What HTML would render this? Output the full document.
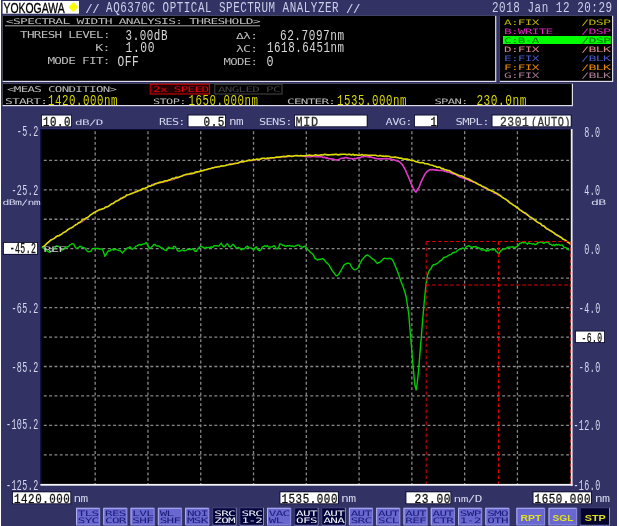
<!DOCTYPE html>
<html><head><meta charset="utf-8"><title>AQ6370C OPTICAL SPECTRUM ANALYZER</title>
<style>html,body{margin:0;padding:0;background:#323264;overflow:hidden}svg{will-change:transform}svg text{white-space:pre}</style></head>
<body><svg width="619" height="526" viewBox="0 0 619 526" style="display:block"><rect x="0.00" y="0.00" width="619.00" height="526.00" fill="#323264"/>
<rect x="0.00" y="0.00" width="1.00" height="526.00" fill="#ffffff"/>
<rect x="617.00" y="0.00" width="2.00" height="526.00" fill="#ffffff"/>
<rect x="2.60" y="1.00" width="76.40" height="12.70" fill="#ffffff"/>
<text x="3.60" y="12.90" font-family='"Liberation Sans", sans-serif' font-size="14.39" fill="#000000" textLength="61.00" lengthAdjust="spacingAndGlyphs" xml:space="preserve" stroke="#000" stroke-width="0.35">YOKOGAWA</text>
<polygon points="73.3,1.9 78,7.1 73.3,12.3 68.6,7.1" fill="#ffff00"/>
<text x="85.20" y="11.60" font-family='"DejaVu Sans Mono", "Liberation Mono", monospace' font-size="10.15" fill="#ceceea" textLength="14.00" lengthAdjust="spacingAndGlyphs" xml:space="preserve" letter-spacing="-0.56">//</text>
<text x="106.10" y="12.00" font-family='"Liberation Mono", monospace' font-size="13.81" fill="#ceceea" textLength="233.00" lengthAdjust="spacingAndGlyphs" xml:space="preserve" letter-spacing="0.69">AQ6370C OPTICAL SPECTRUM ANALYZER</text>
<text x="346.00" y="11.60" font-family='"DejaVu Sans Mono", "Liberation Mono", monospace' font-size="10.15" fill="#ceceea" textLength="14.00" lengthAdjust="spacingAndGlyphs" xml:space="preserve" letter-spacing="-0.56">//</text>
<text x="492.00" y="12.00" font-family='"Liberation Mono", monospace' font-size="13.81" fill="#ceceea" textLength="120.60" lengthAdjust="spacingAndGlyphs" xml:space="preserve" letter-spacing="0.69">2018 Jan 12 20:29</text>
<rect x="2.60" y="15.80" width="493.70" height="66.20" fill="#dcdcec"/>
<rect x="2.60" y="15.80" width="492.50" height="65.00" fill="#000000"/>
<text x="6.00" y="23.80" font-family='"DejaVu Sans Mono", "Liberation Mono", monospace' font-size="7.82" fill="#bcbcbc" textLength="253.80" lengthAdjust="spacingAndGlyphs" xml:space="preserve" letter-spacing="-0.43">&lt;SPECTRAL WIDTH ANALYSIS: THRESHOLD&gt;</text>
<line x1="5.00" y1="25.80" x2="260.00" y2="25.80" stroke="#a8a8a8" stroke-width="1.00"/>
<text x="20.00" y="38.00" font-family='"DejaVu Sans Mono", "Liberation Mono", monospace' font-size="8.78" fill="#bcbcbc" textLength="89.80" lengthAdjust="spacingAndGlyphs" xml:space="preserve" letter-spacing="-0.48">THRESH LEVEL:</text>
<text x="95.30" y="51.00" font-family='"DejaVu Sans Mono", "Liberation Mono", monospace' font-size="8.78" fill="#bcbcbc" textLength="14.50" lengthAdjust="spacingAndGlyphs" xml:space="preserve" letter-spacing="-0.48">K:</text>
<text x="47.40" y="64.00" font-family='"DejaVu Sans Mono", "Liberation Mono", monospace' font-size="8.78" fill="#bcbcbc" textLength="62.40" lengthAdjust="spacingAndGlyphs" xml:space="preserve" letter-spacing="-0.48">MODE FIT:</text>
<text x="125.60" y="39.50" font-family='"Liberation Mono", monospace' font-size="13.96" fill="#d8d8d8" textLength="42.40" lengthAdjust="spacingAndGlyphs" xml:space="preserve" letter-spacing="0.70">3.00dB</text>
<text x="125.60" y="52.40" font-family='"Liberation Mono", monospace' font-size="13.81" fill="#d8d8d8" textLength="29.40" lengthAdjust="spacingAndGlyphs" xml:space="preserve" letter-spacing="0.69">1.00</text>
<text x="117.50" y="65.60" font-family='"Liberation Mono", monospace' font-size="14.11" fill="#d8d8d8" textLength="21.90" lengthAdjust="spacingAndGlyphs" xml:space="preserve" letter-spacing="0.71">OFF</text>
<text x="236.00" y="38.50" font-family='"DejaVu Sans Mono", "Liberation Mono", monospace' font-size="8.78" fill="#bcbcbc" textLength="21.30" lengthAdjust="spacingAndGlyphs" xml:space="preserve" letter-spacing="-0.48">Δλ:</text>
<text x="236.00" y="51.50" font-family='"DejaVu Sans Mono", "Liberation Mono", monospace' font-size="8.78" fill="#bcbcbc" textLength="21.30" lengthAdjust="spacingAndGlyphs" xml:space="preserve" letter-spacing="-0.48">λC:</text>
<text x="223.60" y="64.50" font-family='"DejaVu Sans Mono", "Liberation Mono", monospace' font-size="8.78" fill="#bcbcbc" textLength="33.70" lengthAdjust="spacingAndGlyphs" xml:space="preserve" letter-spacing="-0.48">MODE:</text>
<text x="280.00" y="39.50" font-family='"Liberation Mono", monospace' font-size="13.96" fill="#d8d8d8" textLength="64.60" lengthAdjust="spacingAndGlyphs" xml:space="preserve" letter-spacing="0.70">62.7097nm</text>
<text x="267.00" y="52.40" font-family='"Liberation Mono", monospace' font-size="13.81" fill="#d8d8d8" textLength="77.60" lengthAdjust="spacingAndGlyphs" xml:space="preserve" letter-spacing="0.69">1618.6451nm</text>
<text x="266.40" y="65.60" font-family='"Liberation Mono", monospace' font-size="14.11" fill="#d8d8d8" textLength="7.60" lengthAdjust="spacingAndGlyphs" xml:space="preserve" letter-spacing="0.71">0</text>
<rect x="499.80" y="15.80" width="113.40" height="66.20" fill="#dcdcec"/>
<rect x="499.80" y="15.80" width="112.20" height="65.00" fill="#000000"/>
<rect x="503.00" y="36.00" width="107.80" height="8.00" fill="#00ff00"/>
<text x="504.00" y="25.40" font-family='"DejaVu Sans Mono", "Liberation Mono", monospace' font-size="7.41" fill="#bcb400" textLength="34.65" lengthAdjust="spacingAndGlyphs" xml:space="preserve" letter-spacing="-0.41">A:FIX</text>
<text x="581.20" y="25.40" font-family='"DejaVu Sans Mono", "Liberation Mono", monospace' font-size="7.41" fill="#bcb400" textLength="29.00" lengthAdjust="spacingAndGlyphs" xml:space="preserve" letter-spacing="-0.41">/DSP</text>
<text x="504.00" y="34.00" font-family='"DejaVu Sans Mono", "Liberation Mono", monospace' font-size="7.41" fill="#d828b8" textLength="48.51" lengthAdjust="spacingAndGlyphs" xml:space="preserve" letter-spacing="-0.41">B:WRITE</text>
<text x="581.20" y="34.00" font-family='"DejaVu Sans Mono", "Liberation Mono", monospace' font-size="7.41" fill="#d828b8" textLength="29.00" lengthAdjust="spacingAndGlyphs" xml:space="preserve" letter-spacing="-0.41">/DSP</text>
<text x="504.00" y="43.00" font-family='"DejaVu Sans Mono", "Liberation Mono", monospace' font-size="7.41" fill="#007000" textLength="34.65" lengthAdjust="spacingAndGlyphs" xml:space="preserve" letter-spacing="-0.41">C:B-A</text>
<text x="581.20" y="43.00" font-family='"DejaVu Sans Mono", "Liberation Mono", monospace' font-size="7.41" fill="#007000" textLength="29.00" lengthAdjust="spacingAndGlyphs" xml:space="preserve" letter-spacing="-0.41">/DSP</text>
<text x="504.00" y="52.20" font-family='"DejaVu Sans Mono", "Liberation Mono", monospace' font-size="7.41" fill="#d88888" textLength="34.65" lengthAdjust="spacingAndGlyphs" xml:space="preserve" letter-spacing="-0.41">D:FIX</text>
<text x="581.20" y="52.20" font-family='"DejaVu Sans Mono", "Liberation Mono", monospace' font-size="7.41" fill="#d88888" textLength="29.00" lengthAdjust="spacingAndGlyphs" xml:space="preserve" letter-spacing="-0.41">/BLK</text>
<text x="504.00" y="60.80" font-family='"DejaVu Sans Mono", "Liberation Mono", monospace' font-size="7.41" fill="#4858c8" textLength="34.65" lengthAdjust="spacingAndGlyphs" xml:space="preserve" letter-spacing="-0.41">E:FIX</text>
<text x="581.20" y="60.80" font-family='"DejaVu Sans Mono", "Liberation Mono", monospace' font-size="7.41" fill="#4858c8" textLength="29.00" lengthAdjust="spacingAndGlyphs" xml:space="preserve" letter-spacing="-0.41">/BLK</text>
<text x="504.00" y="69.60" font-family='"DejaVu Sans Mono", "Liberation Mono", monospace' font-size="7.41" fill="#e88800" textLength="34.65" lengthAdjust="spacingAndGlyphs" xml:space="preserve" letter-spacing="-0.41">F:FIX</text>
<text x="581.20" y="69.60" font-family='"DejaVu Sans Mono", "Liberation Mono", monospace' font-size="7.41" fill="#e88800" textLength="29.00" lengthAdjust="spacingAndGlyphs" xml:space="preserve" letter-spacing="-0.41">/BLK</text>
<text x="504.00" y="78.20" font-family='"DejaVu Sans Mono", "Liberation Mono", monospace' font-size="7.41" fill="#a87898" textLength="34.65" lengthAdjust="spacingAndGlyphs" xml:space="preserve" letter-spacing="-0.41">G:FIX</text>
<text x="581.20" y="78.20" font-family='"DejaVu Sans Mono", "Liberation Mono", monospace' font-size="7.41" fill="#a87898" textLength="29.00" lengthAdjust="spacingAndGlyphs" xml:space="preserve" letter-spacing="-0.41">/BLK</text>
<rect x="2.60" y="83.70" width="570.40" height="22.50" fill="#dcdcec"/>
<rect x="2.60" y="83.70" width="569.20" height="21.30" fill="#000000"/>
<text x="7.00" y="92.40" font-family='"DejaVu Sans Mono", "Liberation Mono", monospace' font-size="7.96" fill="#bcbcbc" textLength="109.40" lengthAdjust="spacingAndGlyphs" xml:space="preserve" letter-spacing="-0.44">&lt;MEAS CONDITION&gt;</text>
<text x="5.00" y="104.00" font-family='"DejaVu Sans Mono", "Liberation Mono", monospace' font-size="7.96" fill="#bcbcbc" textLength="42.20" lengthAdjust="spacingAndGlyphs" xml:space="preserve" letter-spacing="-0.44">START:</text>
<text x="48.00" y="104.50" font-family='"Liberation Mono", monospace' font-size="13.96" fill="#d8d800" textLength="70.00" lengthAdjust="spacingAndGlyphs" xml:space="preserve" letter-spacing="0.70">1420.000nm</text>
<rect x="150.20" y="84.20" width="59.40" height="9.80" fill="#240000" stroke="#e00000" stroke-width="1"/>
<text x="153.00" y="92.40" font-family='"DejaVu Sans Mono", "Liberation Mono", monospace' font-size="7.68" fill="#e40000" textLength="55.40" lengthAdjust="spacingAndGlyphs" xml:space="preserve" letter-spacing="-0.42">2x SPEED</text>
<rect x="214.80" y="84.20" width="67.20" height="9.80" fill="#000000" stroke="#484848" stroke-width="1"/>
<text x="218.00" y="92.40" font-family='"DejaVu Sans Mono", "Liberation Mono", monospace' font-size="7.68" fill="#404040" textLength="61.80" lengthAdjust="spacingAndGlyphs" xml:space="preserve" letter-spacing="-0.42">ANGLED PC</text>
<text x="153.00" y="104.00" font-family='"DejaVu Sans Mono", "Liberation Mono", monospace' font-size="7.41" fill="#bcbcbc" textLength="32.80" lengthAdjust="spacingAndGlyphs" xml:space="preserve" letter-spacing="-0.41">STOP:</text>
<text x="188.40" y="104.50" font-family='"Liberation Mono", monospace' font-size="13.96" fill="#d8d800" textLength="70.20" lengthAdjust="spacingAndGlyphs" xml:space="preserve" letter-spacing="0.70">1650.000nm</text>
<text x="287.00" y="104.00" font-family='"DejaVu Sans Mono", "Liberation Mono", monospace' font-size="7.41" fill="#bcbcbc" textLength="48.20" lengthAdjust="spacingAndGlyphs" xml:space="preserve" letter-spacing="-0.41">CENTER:</text>
<text x="337.00" y="104.50" font-family='"Liberation Mono", monospace' font-size="13.96" fill="#d8d800" textLength="70.00" lengthAdjust="spacingAndGlyphs" xml:space="preserve" letter-spacing="0.70">1535.000nm</text>
<text x="434.40" y="104.00" font-family='"DejaVu Sans Mono", "Liberation Mono", monospace' font-size="7.41" fill="#bcbcbc" textLength="33.40" lengthAdjust="spacingAndGlyphs" xml:space="preserve" letter-spacing="-0.41">SPAN:</text>
<text x="476.40" y="104.50" font-family='"Liberation Mono", monospace' font-size="13.96" fill="#d8d800" textLength="50.60" lengthAdjust="spacingAndGlyphs" xml:space="preserve" letter-spacing="0.70">230.0nm</text>
<rect x="41.00" y="114.60" width="31.00" height="12.60" fill="#0a0a30"/>
<rect x="41.90" y="115.50" width="29.20" height="10.80" fill="#ffffff"/>
<text x="43.00" y="126.00" font-family='"Liberation Mono", monospace' font-size="13.20" fill="#101010" textLength="28.00" lengthAdjust="spacingAndGlyphs" xml:space="preserve" letter-spacing="0.66" stroke="#101010" stroke-width="0.3">10.0</text>
<text x="75.00" y="125.20" font-family='"DejaVu Sans Mono", "Liberation Mono", monospace' font-size="7.68" fill="#d4d4ec" textLength="27.80" lengthAdjust="spacingAndGlyphs" xml:space="preserve" letter-spacing="-0.42">dB/D</text>
<text x="159.00" y="125.20" font-family='"DejaVu Sans Mono", "Liberation Mono", monospace' font-size="8.23" fill="#d4d4ec" textLength="25.80" lengthAdjust="spacingAndGlyphs" xml:space="preserve" letter-spacing="-0.45">RES:</text>
<rect x="187.60" y="114.60" width="38.40" height="12.60" fill="#0a0a30"/>
<rect x="188.50" y="115.50" width="36.60" height="10.80" fill="#ffffff"/>
<text x="203.60" y="126.00" font-family='"Liberation Mono", monospace' font-size="13.20" fill="#101010" textLength="21.40" lengthAdjust="spacingAndGlyphs" xml:space="preserve" letter-spacing="0.66" stroke="#101010" stroke-width="0.3">0.5</text>
<text x="229.00" y="125.20" font-family='"DejaVu Sans Mono", "Liberation Mono", monospace' font-size="9.69" fill="#d4d4ec" textLength="13.80" lengthAdjust="spacingAndGlyphs" xml:space="preserve" letter-spacing="-0.53">nm</text>
<text x="259.00" y="125.20" font-family='"DejaVu Sans Mono", "Liberation Mono", monospace' font-size="8.23" fill="#d4d4ec" textLength="32.80" lengthAdjust="spacingAndGlyphs" xml:space="preserve" letter-spacing="-0.45">SENS:</text>
<rect x="294.00" y="114.60" width="73.60" height="12.60" fill="#0a0a30"/>
<rect x="294.90" y="115.50" width="71.80" height="10.80" fill="#ffffff"/>
<text x="295.60" y="126.00" font-family='"Liberation Mono", monospace' font-size="13.20" fill="#303030" textLength="23.00" lengthAdjust="spacingAndGlyphs" xml:space="preserve" letter-spacing="0.66" stroke="#303030" stroke-width="0.3">MID</text>
<text x="385.60" y="125.20" font-family='"DejaVu Sans Mono", "Liberation Mono", monospace' font-size="8.23" fill="#d4d4ec" textLength="26.20" lengthAdjust="spacingAndGlyphs" xml:space="preserve" letter-spacing="-0.45">AVG:</text>
<rect x="414.00" y="114.60" width="24.00" height="12.60" fill="#0a0a30"/>
<rect x="414.90" y="115.50" width="22.20" height="10.80" fill="#ffffff"/>
<text x="430.40" y="126.00" font-family='"Liberation Mono", monospace' font-size="13.20" fill="#101010" textLength="7.00" lengthAdjust="spacingAndGlyphs" xml:space="preserve" letter-spacing="0.66" stroke="#101010" stroke-width="0.3">1</text>
<text x="455.60" y="125.20" font-family='"DejaVu Sans Mono", "Liberation Mono", monospace' font-size="8.23" fill="#d4d4ec" textLength="33.20" lengthAdjust="spacingAndGlyphs" xml:space="preserve" letter-spacing="-0.45">SMPL:</text>
<rect x="491.60" y="114.60" width="80.00" height="12.60" fill="#0a0a30"/>
<rect x="492.50" y="115.50" width="78.20" height="10.80" fill="#ffffff"/>
<text x="500.00" y="126.00" font-family='"Liberation Mono", monospace' font-size="13.20" fill="#303030" textLength="29.40" lengthAdjust="spacingAndGlyphs" xml:space="preserve" letter-spacing="0.66" stroke="#303030" stroke-width="0.3">2301</text>
<text x="531.00" y="126.00" font-family='"Liberation Mono", monospace' font-size="13.20" fill="#303030" textLength="40.00" lengthAdjust="spacingAndGlyphs" xml:space="preserve" letter-spacing="0.66" stroke="#303030" stroke-width="0.3">(AUTO)</text>
<rect x="40.20" y="129.00" width="530.80" height="355.00" fill="#0c0c38"/>
<rect x="41.60" y="130.00" width="529.40" height="354.00" fill="#000000"/>
<line x1="95.18" y1="131.30" x2="95.18" y2="484.00" stroke="#888888" stroke-width="1.30" stroke-dasharray="2.9 2.43"/>
<line x1="147.96" y1="131.30" x2="147.96" y2="484.00" stroke="#888888" stroke-width="1.30" stroke-dasharray="2.9 2.43"/>
<line x1="200.74" y1="131.30" x2="200.74" y2="484.00" stroke="#888888" stroke-width="1.30" stroke-dasharray="2.9 2.43"/>
<line x1="253.52" y1="131.30" x2="253.52" y2="484.00" stroke="#888888" stroke-width="1.30" stroke-dasharray="2.9 2.43"/>
<line x1="306.30" y1="131.30" x2="306.30" y2="484.00" stroke="#888888" stroke-width="1.30" stroke-dasharray="2.9 2.43"/>
<line x1="359.08" y1="131.30" x2="359.08" y2="484.00" stroke="#888888" stroke-width="1.30" stroke-dasharray="2.9 2.43"/>
<line x1="411.86" y1="131.30" x2="411.86" y2="484.00" stroke="#888888" stroke-width="1.30" stroke-dasharray="2.9 2.43"/>
<line x1="464.64" y1="131.30" x2="464.64" y2="484.00" stroke="#888888" stroke-width="1.30" stroke-dasharray="2.9 2.43"/>
<line x1="517.42" y1="131.30" x2="517.42" y2="484.00" stroke="#888888" stroke-width="1.30" stroke-dasharray="2.9 2.43"/>
<line x1="43.80" y1="160.35" x2="570.50" y2="160.35" stroke="#888888" stroke-width="1.30" stroke-dasharray="2.9 2.43"/>
<line x1="43.80" y1="189.80" x2="570.50" y2="189.80" stroke="#888888" stroke-width="1.30" stroke-dasharray="2.9 2.43"/>
<line x1="43.80" y1="219.25" x2="570.50" y2="219.25" stroke="#888888" stroke-width="1.30" stroke-dasharray="2.9 2.43"/>
<line x1="43.80" y1="248.70" x2="570.50" y2="248.70" stroke="#888888" stroke-width="1.30" stroke-dasharray="2.9 2.43"/>
<line x1="43.80" y1="278.15" x2="570.50" y2="278.15" stroke="#888888" stroke-width="1.30" stroke-dasharray="2.9 2.43"/>
<line x1="43.80" y1="307.60" x2="570.50" y2="307.60" stroke="#888888" stroke-width="1.30" stroke-dasharray="2.9 2.43"/>
<line x1="43.80" y1="337.05" x2="570.50" y2="337.05" stroke="#888888" stroke-width="1.30" stroke-dasharray="2.9 2.43"/>
<line x1="43.80" y1="366.50" x2="570.50" y2="366.50" stroke="#888888" stroke-width="1.30" stroke-dasharray="2.9 2.43"/>
<line x1="43.80" y1="395.95" x2="570.50" y2="395.95" stroke="#888888" stroke-width="1.30" stroke-dasharray="2.9 2.43"/>
<line x1="43.80" y1="425.40" x2="570.50" y2="425.40" stroke="#888888" stroke-width="1.30" stroke-dasharray="2.9 2.43"/>
<line x1="43.80" y1="454.85" x2="570.50" y2="454.85" stroke="#888888" stroke-width="1.30" stroke-dasharray="2.9 2.43"/>
<polyline fill="none" stroke="#d838c0" stroke-width="1.00" stroke-linejoin="round" stroke-linecap="round" points="42.5,247.5 44.0,246.0 45.5,245.0 47.0,243.1 48.5,241.5 50.0,240.3 51.5,239.6 53.0,238.7 54.5,238.0 56.0,237.2 57.5,236.5 59.0,235.3 60.5,234.7 62.0,233.7 63.5,232.6 65.0,231.8 66.5,230.7 68.0,230.0 69.5,228.9 71.0,228.0 72.5,227.3 74.0,225.6 75.5,225.4 77.0,224.2 78.5,223.4 80.0,223.1 81.5,222.2 83.0,221.7 84.5,220.2 86.0,219.0 87.5,217.8 89.0,216.4 90.5,214.8 92.0,213.8 93.5,213.1 95.0,211.9 96.5,211.1 98.0,210.1 99.5,209.8 101.0,209.5 102.5,209.2 104.0,208.6 105.5,207.9 107.0,206.9 108.5,205.7 110.0,204.9 111.5,203.8 113.0,203.0 114.5,202.3 116.0,201.5 117.5,200.7 119.0,199.8 120.5,199.5 122.0,198.8 123.5,197.9 125.0,196.9 126.5,195.9 128.0,194.9 129.5,194.2 131.0,193.5 132.5,193.0 134.0,192.6 135.5,191.7 137.0,191.0 138.5,191.0 140.0,190.5 141.5,190.3 143.0,189.1 144.5,188.8 146.0,188.1 147.5,187.1 149.0,186.3 150.5,185.6 152.0,184.3 153.5,184.0 155.0,183.6 156.5,183.1 158.0,183.1 159.5,183.4 161.0,182.9 162.5,182.2 164.0,182.2 165.5,181.9 167.0,181.5 168.5,180.9 170.0,179.9 171.5,180.3 173.0,179.9 174.5,179.2 176.0,178.6 177.5,178.2 179.0,177.7 180.5,176.7 182.0,176.5 183.5,175.4 185.0,174.7 186.5,175.1 188.0,174.7 189.5,174.5 191.0,174.3 192.5,174.0 194.0,173.0 195.5,173.0 197.0,172.6 198.5,171.7 200.0,171.8 201.5,171.5 203.0,170.4 204.5,169.8 206.0,169.4 207.5,169.3 209.0,168.6 210.5,168.8 212.0,168.4 213.5,167.4 215.0,167.0 216.5,167.0 218.0,166.9 219.5,166.4 221.0,166.6 222.5,166.3 224.0,165.9 225.5,165.3 227.0,165.3 228.5,164.2 230.0,163.9 231.5,163.6 233.0,163.7 234.5,163.8 236.0,163.9 237.5,163.4 239.0,163.0 240.5,162.3 242.0,162.2 243.5,162.1 245.0,161.5 246.5,161.2 248.0,160.5 249.5,161.2 251.0,160.4 252.5,160.7 254.0,160.6 255.5,160.4 257.0,159.7 258.5,159.5 260.0,159.2 261.5,159.2 263.0,158.2 264.5,159.1 266.0,158.7 267.5,159.3 269.0,159.0 270.5,158.4 272.0,158.1 273.5,158.1 275.0,157.6 276.5,157.7 278.0,157.6 279.5,157.6 281.0,157.4 282.5,157.3 284.0,157.1 285.5,156.8 287.0,157.0 288.5,156.9 290.0,156.5 291.5,156.0 293.0,156.4 294.5,155.7 296.0,155.5 297.5,156.0 299.0,155.8 300.5,155.9 302.0,155.6 303.5,156.2 305.0,156.5 306.5,156.6 308.0,156.4 309.5,156.8 311.0,156.7 312.5,156.4 314.0,156.5 315.5,156.6 317.0,156.6 318.5,156.6 320.0,156.7 321.5,156.7 323.0,157.5 324.5,157.2 326.0,158.1 327.5,157.8 329.0,158.8 330.5,158.7 332.0,159.3 333.5,159.1 335.0,159.8 336.5,160.0 338.0,159.8 339.5,159.1 341.0,158.4 342.5,158.2 344.0,158.2 345.5,157.4 347.0,157.8 348.5,158.2 350.0,158.5 351.5,158.5 353.0,159.2 354.5,158.5 356.0,158.6 357.5,158.1 359.0,157.6 360.5,157.7 362.0,156.7 363.5,156.8 365.0,156.3 366.5,156.5 368.0,156.8 369.5,156.9 371.0,157.1 372.5,157.6 374.0,157.7 375.5,158.5 377.0,158.5 378.5,158.9 380.0,158.8 381.5,158.8 383.0,158.8 384.5,158.5 386.0,158.6 387.5,158.5 389.0,158.8 390.5,159.0 392.0,159.6 393.5,159.5 395.0,160.3 396.5,160.8 398.0,161.1 399.5,161.9 401.0,163.2 402.5,164.9 404.0,167.5 405.5,170.2 407.0,173.8 408.5,177.0 410.0,180.7 411.5,184.5 413.0,187.8 414.5,190.7 416.0,192.1 417.5,189.5 419.0,187.4 420.5,183.3 422.0,180.0 423.5,177.0 425.0,174.0 426.5,172.2 428.0,170.9 429.5,169.8 431.0,169.8 432.5,169.6 434.0,169.8 435.5,170.1 437.0,170.1 438.5,170.4 440.0,170.5 441.5,170.5 443.0,170.4 444.5,171.2 446.0,171.4 447.5,172.0 449.0,172.2 450.5,172.8 452.0,173.4 453.5,174.0 455.0,174.1 456.5,175.2 458.0,175.9 459.5,176.7 461.0,177.4 462.5,177.7 464.0,178.3 465.5,179.0 467.0,179.3 468.5,180.1 470.0,180.9 471.5,180.8 473.0,182.0 474.5,182.1 476.0,182.6 477.5,183.6 479.0,184.4 480.5,185.1 482.0,186.4 483.5,188.1 485.0,188.4 486.5,188.9 488.0,190.1 489.5,190.2 491.0,190.9 492.5,192.0 494.0,193.4 495.5,193.4 497.0,194.6 498.5,195.5 500.0,195.8 501.5,196.9 503.0,197.7 504.5,198.5 506.0,198.6 507.5,200.3 509.0,200.9 510.5,202.6 512.0,203.7 513.5,205.0 515.0,206.7 516.5,208.0 518.0,208.9 519.5,210.3 521.0,211.0 522.5,211.9 524.0,213.2 525.5,214.1 527.0,215.2 528.5,215.8 530.0,217.3 531.5,218.9 533.0,219.1 534.5,220.1 536.0,221.2 537.5,222.0 539.0,222.8 540.5,224.1 542.0,225.6 543.5,226.4 545.0,227.8 546.5,229.0 548.0,229.7 549.5,230.4 551.0,231.2 552.5,231.8 554.0,233.6 555.5,234.7 557.0,236.1 558.5,236.1 560.0,237.5 561.5,237.4 563.0,238.3 564.5,239.5 566.0,241.1 567.5,242.2 569.0,243.0 570.5,244.2"/>
<polyline fill="none" stroke="#d838c0" stroke-width="1.60" stroke-linejoin="round" stroke-linecap="round" points="303.5,156.2 305.0,156.5 306.5,156.6 308.0,156.4 309.5,156.8 311.0,156.7 312.5,156.4 314.0,156.5 315.5,156.6 317.0,156.6 318.5,156.6 320.0,156.7 321.5,156.7 323.0,157.5 324.5,157.2 326.0,158.1 327.5,157.8 329.0,158.8 330.5,158.7 332.0,159.3 333.5,159.1 335.0,159.8 336.5,160.0 338.0,159.8 339.5,159.1 341.0,158.4 342.5,158.2 344.0,158.2 345.5,157.4 347.0,157.8 348.5,158.2 350.0,158.5 351.5,158.5 353.0,159.2 354.5,158.5 356.0,158.6 357.5,158.1 359.0,157.6 360.5,157.7 362.0,156.7 363.5,156.8 365.0,156.3 366.5,156.5 368.0,156.8 369.5,156.9 371.0,157.1 372.5,157.6 374.0,157.7 375.5,158.5 377.0,158.5 378.5,158.9 380.0,158.8 381.5,158.8 383.0,158.8 384.5,158.5 386.0,158.6 387.5,158.5 389.0,158.8 390.5,159.0 392.0,159.6 393.5,159.5 395.0,160.3 396.5,160.8 398.0,161.1 399.5,161.9 401.0,163.2 402.5,164.9 404.0,167.5 405.5,170.2 407.0,173.8 408.5,177.0 410.0,180.7 411.5,184.5 413.0,187.8 414.5,190.7 416.0,192.1 417.5,189.5 419.0,187.4 420.5,183.3 422.0,180.0 423.5,177.0 425.0,174.0 426.5,172.2 428.0,170.9 429.5,169.8 431.0,169.8 432.5,169.6 434.0,169.8 435.5,170.1 437.0,170.1 438.5,170.4 440.0,170.5 441.5,170.5 443.0,170.4 444.5,171.2 446.0,171.4 447.5,172.0 449.0,172.2 450.5,172.8 452.0,173.4 453.5,174.0 455.0,174.1 456.5,175.2 458.0,175.9 459.5,176.7 461.0,177.4 462.5,177.7 464.0,178.3 465.5,179.0 467.0,179.3 468.5,180.1 470.0,180.9 471.5,180.8 473.0,182.0"/>
<polyline fill="none" stroke="#dcdc00" stroke-width="1.60" stroke-linejoin="round" stroke-linecap="round" points="42.5,247.1 44.0,246.2 45.5,244.9 47.0,243.2 48.5,242.3 50.0,240.7 51.5,239.8 53.0,239.1 54.5,238.1 56.0,236.8 57.5,235.9 59.0,235.7 60.5,234.8 62.0,233.8 63.5,232.5 65.0,232.1 66.5,230.9 68.0,229.5 69.5,228.6 71.0,228.0 72.5,227.3 74.0,226.0 75.5,224.8 77.0,224.2 78.5,222.7 80.0,222.2 81.5,221.0 83.0,219.7 84.5,219.1 86.0,218.1 87.5,217.5 89.0,216.3 90.5,214.9 92.0,214.1 93.5,212.8 95.0,212.2 96.5,211.3 98.0,210.6 99.5,209.6 101.0,209.5 102.5,208.8 104.0,208.4 105.5,207.0 107.0,206.9 108.5,206.3 110.0,205.1 111.5,203.8 113.0,203.6 114.5,202.3 116.0,201.2 117.5,200.7 119.0,200.0 120.5,198.5 122.0,198.0 123.5,197.2 125.0,196.7 126.5,195.1 128.0,194.8 129.5,194.4 131.0,193.7 132.5,193.4 134.0,192.6 135.5,192.1 137.0,191.5 138.5,190.5 140.0,190.5 141.5,189.5 143.0,188.5 144.5,188.6 146.0,187.8 147.5,187.2 149.0,186.0 150.5,186.1 152.0,185.2 153.5,185.0 155.0,183.9 156.5,183.6 158.0,182.9 159.5,182.3 161.0,182.1 162.5,182.0 164.0,181.2 165.5,180.7 167.0,180.8 168.5,180.1 170.0,179.9 171.5,178.8 173.0,178.3 174.5,178.5 176.0,177.2 177.5,177.4 179.0,177.1 180.5,176.5 182.0,175.9 183.5,175.3 185.0,174.8 186.5,174.2 188.0,174.1 189.5,173.8 191.0,173.2 192.5,173.4 194.0,173.1 195.5,172.0 197.0,171.9 198.5,171.8 200.0,171.2 201.5,170.6 203.0,170.7 204.5,170.0 206.0,169.7 207.5,169.4 209.0,168.7 210.5,168.6 212.0,167.9 213.5,167.9 215.0,167.2 216.5,167.3 218.0,166.6 219.5,166.8 221.0,165.8 222.5,166.0 224.0,165.8 225.5,165.6 227.0,165.0 228.5,164.7 230.0,164.2 231.5,164.4 233.0,164.0 234.5,163.5 236.0,163.2 237.5,163.2 239.0,162.5 240.5,161.8 242.0,161.5 243.5,161.7 245.0,161.2 246.5,161.0 248.0,160.6 249.5,160.0 251.0,160.5 252.5,159.9 254.0,159.7 255.5,159.5 257.0,159.0 258.5,159.6 260.0,159.4 261.5,158.4 263.0,158.2 264.5,158.3 266.0,158.7 267.5,158.1 269.0,158.4 270.5,157.7 272.0,157.7 273.5,157.8 275.0,157.6 276.5,157.1 278.0,157.1 279.5,157.1 281.0,156.8 282.5,156.5 284.0,156.4 285.5,156.7 287.0,156.1 288.5,155.9 290.0,155.9 291.5,156.4 293.0,156.3 294.5,155.8 296.0,155.5 297.5,155.6 299.0,156.0 300.5,155.6 302.0,155.9 303.5,155.8 305.0,155.7 306.5,155.7 308.0,155.3 309.5,155.0 311.0,155.4 312.5,155.6 314.0,155.2 315.5,154.7 317.0,155.3 318.5,155.2 320.0,155.1 321.5,154.8 323.0,155.0 324.5,154.3 326.0,154.6 327.5,154.9 329.0,154.9 330.5,154.8 332.0,154.6 333.5,154.6 335.0,154.4 336.5,154.3 338.0,154.9 339.5,154.6 341.0,154.4 342.5,154.3 344.0,154.2 345.5,154.2 347.0,154.7 348.5,154.4 350.0,154.4 351.5,155.0 353.0,154.3 354.5,155.2 356.0,154.7 357.5,155.1 359.0,155.2 360.5,155.1 362.0,154.6 363.5,155.2 365.0,155.0 366.5,155.0 368.0,155.2 369.5,155.4 371.0,155.2 372.5,155.3 374.0,155.2 375.5,155.2 377.0,155.7 378.5,156.1 380.0,155.4 381.5,156.0 383.0,156.1 384.5,156.3 386.0,156.1 387.5,156.2 389.0,156.3 390.5,157.0 392.0,157.2 393.5,157.3 395.0,157.1 396.5,157.4 398.0,157.6 399.5,158.2 401.0,158.0 402.5,158.8 404.0,159.1 405.5,159.1 407.0,159.1 408.5,159.5 410.0,160.1 411.5,160.6 413.0,160.4 414.5,161.1 416.0,161.7 417.5,161.9 419.0,162.4 420.5,162.8 422.0,162.5 423.5,162.8 425.0,163.8 426.5,163.7 428.0,163.9 429.5,164.7 431.0,165.0 432.5,165.2 434.0,166.2 435.5,166.3 437.0,167.2 438.5,167.0 440.0,167.3 441.5,168.6 443.0,168.5 444.5,169.6 446.0,169.7 447.5,170.5 449.0,170.5 450.5,171.3 452.0,172.3 453.5,173.1 455.0,173.6 456.5,174.3 458.0,174.9 459.5,175.7 461.0,175.7 462.5,176.3 464.0,177.1 465.5,178.1 467.0,178.6 468.5,179.0 470.0,179.8 471.5,180.6 473.0,181.4 474.5,182.1 476.0,183.0 477.5,183.9 479.0,184.8 480.5,185.1 482.0,186.3 483.5,186.6 485.0,187.4 486.5,188.2 488.0,189.3 489.5,190.0 491.0,190.5 492.5,191.2 494.0,191.8 495.5,192.8 497.0,193.4 498.5,194.5 500.0,195.3 501.5,196.7 503.0,197.8 504.5,198.6 506.0,199.6 507.5,200.6 509.0,202.2 510.5,203.3 512.0,204.0 513.5,205.3 515.0,205.9 516.5,207.2 518.0,208.0 519.5,209.6 521.0,210.4 522.5,211.7 524.0,212.5 525.5,213.1 527.0,214.3 528.5,215.7 530.0,217.0 531.5,217.8 533.0,218.6 534.5,219.9 536.0,221.0 537.5,222.3 539.0,223.0 540.5,223.5 542.0,225.4 543.5,225.7 545.0,226.9 546.5,228.5 548.0,229.2 549.5,230.2 551.0,231.0 552.5,232.0 554.0,232.9 555.5,234.3 557.0,234.9 558.5,235.7 560.0,236.8 561.5,237.7 563.0,239.3 564.5,239.7 566.0,240.7 567.5,242.0 569.0,242.7 570.5,244.1"/>
<polyline fill="none" stroke="#00cc00" stroke-width="1.40" stroke-linejoin="round" stroke-linecap="round" points="42.4,247.6 43.7,248.0 44.9,249.4 46.2,250.5 47.4,251.0 48.7,252.0 49.9,252.2 51.2,251.5 52.4,250.5 53.7,249.1 54.9,247.9 56.2,246.0 57.4,246.1 58.7,246.5 59.9,247.3 61.2,249.9 62.4,250.0 63.7,248.9 64.9,247.9 66.2,246.9 67.4,247.0 68.7,246.4 69.9,244.9 71.2,244.4 72.4,243.7 73.7,244.1 74.9,246.7 76.2,248.0 77.4,248.1 78.7,247.4 79.9,246.1 81.2,247.0 82.4,247.3 83.7,247.6 84.9,248.1 86.2,249.9 87.4,251.4 88.7,251.9 89.9,251.5 91.2,251.0 92.4,248.7 93.7,248.5 94.9,248.1 96.2,248.6 97.4,248.3 98.7,248.6 99.9,249.0 101.2,248.9 102.4,249.3 103.7,252.5 104.9,256.2 106.2,254.5 107.4,251.9 108.7,250.8 109.9,251.0 111.2,249.6 112.4,249.3 113.7,250.1 114.9,249.1 116.2,249.4 117.4,249.8 118.7,250.5 119.9,250.5 121.2,251.6 122.4,252.9 123.7,251.6 124.9,250.1 126.2,249.1 127.4,248.0 128.7,247.7 129.9,246.8 131.2,248.2 132.4,249.3 133.7,248.3 134.9,247.5 136.2,245.9 137.4,245.7 138.7,244.8 139.9,244.4 141.2,245.1 142.4,244.2 143.7,244.0 144.9,243.6 146.2,242.5 147.4,245.0 148.7,247.3 149.9,248.8 151.2,247.6 152.4,246.2 153.7,244.7 154.9,244.4 156.2,245.8 157.4,246.0 158.7,245.9 159.9,246.9 161.2,247.8 162.4,248.1 163.7,249.2 164.9,250.2 166.2,250.6 167.4,248.7 168.7,247.1 169.9,248.2 171.2,248.2 172.4,248.5 173.7,246.4 174.9,246.5 176.2,248.1 177.4,250.5 178.7,251.1 179.9,251.1 181.2,250.3 182.4,249.9 183.7,250.7 184.9,250.8 186.2,250.4 187.4,249.1 188.7,249.5 189.9,249.4 191.2,249.6 192.4,248.7 193.7,249.6 194.9,251.2 196.2,251.3 197.4,249.5 198.7,247.9 199.9,246.7 201.2,246.4 202.4,247.0 203.7,247.7 204.9,248.4 206.2,247.3 207.4,247.8 208.7,247.3 209.9,247.9 211.2,246.8 212.4,247.4 213.7,246.0 214.9,245.6 216.2,245.8 217.4,245.8 218.7,246.2 219.9,244.6 221.2,243.1 222.4,245.5 223.7,246.8 224.9,246.6 226.2,244.6 227.4,243.7 228.7,246.0 229.9,247.1 231.2,246.5 232.4,244.5 233.7,244.8 234.9,246.6 236.2,247.8 237.4,247.9 238.7,247.3 239.9,248.2 241.2,249.9 242.4,248.9 243.7,249.1 244.9,248.4 246.2,246.8 247.4,246.2 248.7,247.6 249.9,247.9 251.2,248.0 252.4,248.9 253.7,249.8 254.9,248.1 256.2,246.8 257.4,249.2 258.7,250.4 259.9,250.7 261.2,249.3 262.4,246.8 263.7,246.3 264.9,245.7 266.2,246.6 267.4,245.6 268.7,247.1 269.9,246.9 271.2,247.1 272.4,246.8 273.7,245.7 274.9,246.3 276.2,248.9 277.4,248.8 278.7,247.2 279.9,243.8 281.2,244.2 282.4,245.3 283.7,245.1 284.9,246.1 286.2,246.4 287.4,245.6 288.7,245.7 289.9,245.5 291.2,246.2 292.4,245.9 293.7,246.5 294.9,246.2 296.2,245.6 297.4,245.2 298.7,244.9 299.9,246.2 301.2,246.5 302.4,247.5 303.7,246.6 304.9,246.1 306.2,247.5 307.4,249.8 308.7,250.1 309.9,251.8 311.2,253.0 312.4,253.8 313.7,255.5 314.9,258.5 316.2,258.9 317.4,260.1 318.7,259.5 319.9,259.3 321.2,259.2 322.4,258.7 323.7,259.3 324.9,260.8 326.2,262.4 327.4,263.4 328.7,264.5 329.9,266.7 331.2,268.8 332.4,270.9 333.7,272.5 334.9,274.1 336.2,275.9 337.4,275.5 338.7,274.4 339.9,272.2 341.2,270.0 342.4,268.0 343.7,265.4 344.9,264.3 346.2,263.6 347.4,263.1 348.7,263.2 349.9,263.7 351.2,266.3 352.4,268.2 353.7,269.3 354.9,269.8 356.2,269.1 357.4,268.7 358.7,266.9 359.9,263.8 361.2,261.2 362.4,259.4 363.7,257.9 364.9,256.5 366.2,255.4 367.4,255.0 368.7,255.7 369.9,256.7 371.2,257.8 372.4,258.9 373.7,259.5 374.9,260.8 376.2,262.3 377.4,263.5 378.7,262.6 379.9,262.3 381.2,261.1 382.4,259.9 383.7,258.6 384.9,258.1 386.2,258.6 387.4,258.8 388.7,258.5 389.9,258.5 391.2,258.8 392.4,259.7 393.7,262.3 394.9,265.1 396.2,268.2 397.4,271.2 398.7,274.6 399.9,278.2 401.2,281.9 402.4,285.0 403.7,288.5 404.9,292.2 406.2,297.0 407.4,305.0 408.7,313.8 409.9,328.4 411.2,343.4 412.4,358.6 413.7,373.1 414.9,385.2 416.2,390.0 417.4,381.9 418.7,368.8 419.9,353.6 421.2,338.4 422.4,323.2 423.7,308.0 424.9,294.9 426.2,283.4 427.4,275.6 428.7,271.7 429.9,269.8 431.2,268.2 432.4,265.6 433.7,264.4 434.9,264.9 436.2,263.8 437.4,263.4 438.7,262.2 439.9,261.0 441.2,260.4 442.4,259.3 443.7,257.5 444.9,257.2 446.2,257.0 447.4,256.2 448.7,255.4 449.9,254.7 451.2,254.4 452.4,253.0 453.7,252.5 454.9,252.2 456.2,251.9 457.4,250.5 458.7,249.7 459.9,249.2 461.2,248.8 462.4,248.0 463.7,248.5 464.9,248.7 466.2,246.8 467.4,246.5 468.7,245.6 469.9,246.3 471.2,247.5 472.4,247.2 473.7,246.6 474.9,246.7 476.2,246.5 477.4,247.7 478.7,247.8 479.9,248.4 481.2,249.8 482.4,250.0 483.7,250.1 484.9,249.8 486.2,251.2 487.4,249.7 488.7,250.8 489.9,249.6 491.2,249.3 492.4,250.0 493.7,249.8 494.9,249.1 496.2,251.3 497.4,252.1 498.7,254.1 499.9,252.2 501.2,250.1 502.4,249.8 503.7,248.6 504.9,249.1 506.2,248.4 507.4,247.3 508.7,247.2 509.9,247.1 511.2,247.1 512.4,246.8 513.7,247.2 514.9,247.9 516.2,246.8 517.4,246.3 518.7,244.5 519.9,243.3 521.2,243.2 522.4,242.1 523.7,243.0 524.9,242.2 526.2,243.3 527.4,244.3 528.7,242.8 529.9,243.4 531.2,243.6 532.4,244.1 533.7,243.7 534.9,244.6 536.2,244.3 537.4,243.0 538.7,242.5 539.9,242.4 541.2,241.7 542.4,242.6 543.7,243.4 544.9,242.5 546.2,242.3 547.4,242.4 548.7,242.9 549.9,244.3 551.2,244.4 552.4,245.5 553.7,244.5 554.9,245.8 556.2,244.3 557.4,245.1 558.7,244.4 559.9,245.2 561.2,245.1 562.4,245.0 563.7,247.1 564.9,247.5 566.2,247.7 567.4,249.4 568.7,249.9"/>
<line x1="426.20" y1="241.50" x2="570.60" y2="241.50" stroke="#e80000" stroke-width="1.00" stroke-dasharray="3.6 2.4"/>
<line x1="426.20" y1="285.00" x2="570.60" y2="285.00" stroke="#e80000" stroke-width="1.00" stroke-dasharray="3.6 2.4"/>
<line x1="426.20" y1="241.50" x2="426.20" y2="484.00" stroke="#e80000" stroke-width="1.00" stroke-dasharray="3.6 2.4"/>
<line x1="498.50" y1="241.50" x2="498.50" y2="484.00" stroke="#e80000" stroke-width="1.00" stroke-dasharray="3.6 2.4"/>
<line x1="570.30" y1="241.50" x2="570.30" y2="484.00" stroke="#e80000" stroke-width="1.00" stroke-dasharray="3.6 2.4"/>
<rect x="570.80" y="129.00" width="1.80" height="356.70" fill="#ececf8"/>
<rect x="40.40" y="483.90" width="532.20" height="1.80" fill="#f4f4fa"/>
<text x="43.60" y="251.80" font-family='"DejaVu Sans Mono", "Liberation Mono", monospace' font-size="7.68" fill="#c8c8c8" textLength="22.20" lengthAdjust="spacingAndGlyphs" xml:space="preserve" letter-spacing="-0.42">REF</text>
<text x="16.80" y="136.40" font-family='"Liberation Mono", monospace' font-size="13.81" fill="#d8d8f0" textLength="21.80" lengthAdjust="spacingAndGlyphs" xml:space="preserve" letter-spacing="0.69">-5.2</text>
<text x="11.40" y="195.00" font-family='"Liberation Mono", monospace' font-size="13.81" fill="#d8d8f0" textLength="27.20" lengthAdjust="spacingAndGlyphs" xml:space="preserve" letter-spacing="0.69">-25.2</text>
<text x="11.40" y="313.00" font-family='"Liberation Mono", monospace' font-size="13.81" fill="#d8d8f0" textLength="27.20" lengthAdjust="spacingAndGlyphs" xml:space="preserve" letter-spacing="0.69">-65.2</text>
<text x="11.40" y="371.60" font-family='"Liberation Mono", monospace' font-size="13.81" fill="#d8d8f0" textLength="27.20" lengthAdjust="spacingAndGlyphs" xml:space="preserve" letter-spacing="0.69">-85.2</text>
<text x="6.00" y="429.40" font-family='"Liberation Mono", monospace' font-size="13.81" fill="#d8d8f0" textLength="32.60" lengthAdjust="spacingAndGlyphs" xml:space="preserve" letter-spacing="0.69">-105.2</text>
<text x="6.00" y="490.40" font-family='"Liberation Mono", monospace' font-size="13.81" fill="#d8d8f0" textLength="32.60" lengthAdjust="spacingAndGlyphs" xml:space="preserve" letter-spacing="0.69">-125.2</text>
<rect x="3.00" y="242.00" width="35.00" height="12.80" fill="#0a0a30"/>
<rect x="3.90" y="242.90" width="33.20" height="11.00" fill="#ffffff"/>
<text x="9.70" y="253.20" font-family='"Liberation Mono", monospace' font-size="13.81" fill="#101010" textLength="26.70" lengthAdjust="spacingAndGlyphs" xml:space="preserve" letter-spacing="0.69" stroke="#101010" stroke-width="0.3">-45.2</text>
<text x="2.40" y="205.20" font-family='"DejaVu Sans Mono", "Liberation Mono", monospace' font-size="7.68" fill="#d8d8f0" textLength="37.80" lengthAdjust="spacingAndGlyphs" xml:space="preserve" letter-spacing="-0.42">dBm/nm</text>
<text x="584.20" y="136.70" font-family='"Liberation Mono", monospace' font-size="13.81" fill="#d8d8f0" textLength="16.40" lengthAdjust="spacingAndGlyphs" xml:space="preserve" letter-spacing="0.69">8.0</text>
<text x="584.20" y="195.00" font-family='"Liberation Mono", monospace' font-size="13.81" fill="#d8d8f0" textLength="16.40" lengthAdjust="spacingAndGlyphs" xml:space="preserve" letter-spacing="0.69">4.0</text>
<text x="584.20" y="253.70" font-family='"Liberation Mono", monospace' font-size="13.81" fill="#d8d8f0" textLength="16.40" lengthAdjust="spacingAndGlyphs" xml:space="preserve" letter-spacing="0.69">0.0</text>
<text x="578.80" y="313.00" font-family='"Liberation Mono", monospace' font-size="13.81" fill="#d8d8f0" textLength="21.80" lengthAdjust="spacingAndGlyphs" xml:space="preserve" letter-spacing="0.69">-4.0</text>
<text x="578.80" y="371.70" font-family='"Liberation Mono", monospace' font-size="13.81" fill="#d8d8f0" textLength="21.80" lengthAdjust="spacingAndGlyphs" xml:space="preserve" letter-spacing="0.69">-8.0</text>
<text x="573.40" y="429.70" font-family='"Liberation Mono", monospace' font-size="13.81" fill="#d8d8f0" textLength="27.20" lengthAdjust="spacingAndGlyphs" xml:space="preserve" letter-spacing="0.69">-12.0</text>
<text x="573.40" y="490.20" font-family='"Liberation Mono", monospace' font-size="13.81" fill="#d8d8f0" textLength="27.20" lengthAdjust="spacingAndGlyphs" xml:space="preserve" letter-spacing="0.69">-16.0</text>
<text x="591.00" y="205.20" font-family='"DejaVu Sans Mono", "Liberation Mono", monospace' font-size="7.68" fill="#d8d8f0" textLength="14.40" lengthAdjust="spacingAndGlyphs" xml:space="preserve" letter-spacing="-0.42">dB</text>
<rect x="575.00" y="330.60" width="30.00" height="12.40" fill="#0a0a30"/>
<rect x="575.90" y="331.50" width="28.20" height="10.60" fill="#ffffff"/>
<text x="581.60" y="341.60" font-family='"Liberation Mono", monospace' font-size="13.20" fill="#101010" textLength="21.00" lengthAdjust="spacingAndGlyphs" xml:space="preserve" letter-spacing="0.66" stroke="#101010" stroke-width="0.3">-6.0</text>
<rect x="12.00" y="491.40" width="59.20" height="12.80" fill="#0a0a30"/>
<rect x="12.90" y="492.30" width="57.40" height="11.00" fill="#ffffff"/>
<text x="14.00" y="503.00" font-family='"Liberation Mono", monospace' font-size="13.20" fill="#101010" textLength="56.40" lengthAdjust="spacingAndGlyphs" xml:space="preserve" letter-spacing="0.66" stroke="#101010" stroke-width="0.3">1420.000</text>
<text x="73.60" y="501.90" font-family='"DejaVu Sans Mono", "Liberation Mono", monospace' font-size="10.24" fill="#d4d4ec" textLength="14.00" lengthAdjust="spacingAndGlyphs" xml:space="preserve" letter-spacing="-0.56">nm</text>
<rect x="279.50" y="491.40" width="59.30" height="12.80" fill="#0a0a30"/>
<rect x="280.40" y="492.30" width="57.50" height="11.00" fill="#ffffff"/>
<text x="281.50" y="503.00" font-family='"Liberation Mono", monospace' font-size="13.20" fill="#101010" textLength="56.50" lengthAdjust="spacingAndGlyphs" xml:space="preserve" letter-spacing="0.66" stroke="#101010" stroke-width="0.3">1535.000</text>
<text x="341.00" y="501.90" font-family='"DejaVu Sans Mono", "Liberation Mono", monospace' font-size="10.24" fill="#d4d4ec" textLength="14.40" lengthAdjust="spacingAndGlyphs" xml:space="preserve" letter-spacing="-0.56">nm</text>
<rect x="405.50" y="491.40" width="45.80" height="12.80" fill="#0a0a30"/>
<rect x="406.40" y="492.30" width="44.00" height="11.00" fill="#ffffff"/>
<text x="414.50" y="503.00" font-family='"Liberation Mono", monospace' font-size="13.20" fill="#101010" textLength="36.50" lengthAdjust="spacingAndGlyphs" xml:space="preserve" letter-spacing="0.66" stroke="#101010" stroke-width="0.3">23.00</text>
<text x="453.60" y="501.90" font-family='"DejaVu Sans Mono", "Liberation Mono", monospace' font-size="8.92" fill="#d4d4ec" textLength="28.20" lengthAdjust="spacingAndGlyphs" xml:space="preserve" letter-spacing="-0.49">nm/D</text>
<rect x="532.60" y="491.40" width="59.20" height="12.80" fill="#0a0a30"/>
<rect x="533.50" y="492.30" width="57.40" height="11.00" fill="#ffffff"/>
<text x="534.60" y="503.00" font-family='"Liberation Mono", monospace' font-size="13.20" fill="#101010" textLength="56.40" lengthAdjust="spacingAndGlyphs" xml:space="preserve" letter-spacing="0.66" stroke="#101010" stroke-width="0.3">1650.000</text>
<text x="594.80" y="501.90" font-family='"DejaVu Sans Mono", "Liberation Mono", monospace' font-size="10.24" fill="#d4d4ec" textLength="14.60" lengthAdjust="spacingAndGlyphs" xml:space="preserve" letter-spacing="-0.56">nm</text>
<rect x="76.00" y="507.80" width="24.20" height="17.80" fill="#8484d4"/>
<rect x="76.00" y="507.80" width="23.20" height="16.80" fill="#b0b0f0"/>
<rect x="77.00" y="508.80" width="22.20" height="15.80" fill="#6868d0"/>
<text x="77.80" y="516.20" font-family='"DejaVu Sans Mono", "Liberation Mono", monospace' font-size="7.41" fill="#1c1c78" textLength="20.70" lengthAdjust="spacingAndGlyphs" xml:space="preserve" letter-spacing="-0.41">TLS</text>
<text x="77.80" y="523.40" font-family='"DejaVu Sans Mono", "Liberation Mono", monospace' font-size="7.41" fill="#1c1c78" textLength="20.70" lengthAdjust="spacingAndGlyphs" xml:space="preserve" letter-spacing="-0.41">SYC</text>
<rect x="103.29" y="507.80" width="24.20" height="17.80" fill="#8484d4"/>
<rect x="103.29" y="507.80" width="23.20" height="16.80" fill="#b0b0f0"/>
<rect x="104.29" y="508.80" width="22.20" height="15.80" fill="#6868d0"/>
<text x="105.09" y="516.20" font-family='"DejaVu Sans Mono", "Liberation Mono", monospace' font-size="7.41" fill="#1c1c78" textLength="20.70" lengthAdjust="spacingAndGlyphs" xml:space="preserve" letter-spacing="-0.41">RES</text>
<text x="105.09" y="523.40" font-family='"DejaVu Sans Mono", "Liberation Mono", monospace' font-size="7.41" fill="#1c1c78" textLength="20.70" lengthAdjust="spacingAndGlyphs" xml:space="preserve" letter-spacing="-0.41">COR</text>
<rect x="130.58" y="507.80" width="24.20" height="17.80" fill="#8484d4"/>
<rect x="130.58" y="507.80" width="23.20" height="16.80" fill="#b0b0f0"/>
<rect x="131.58" y="508.80" width="22.20" height="15.80" fill="#6868d0"/>
<text x="132.38" y="516.20" font-family='"DejaVu Sans Mono", "Liberation Mono", monospace' font-size="7.41" fill="#1c1c78" textLength="20.70" lengthAdjust="spacingAndGlyphs" xml:space="preserve" letter-spacing="-0.41">LVL</text>
<text x="132.38" y="523.40" font-family='"DejaVu Sans Mono", "Liberation Mono", monospace' font-size="7.41" fill="#1c1c78" textLength="20.70" lengthAdjust="spacingAndGlyphs" xml:space="preserve" letter-spacing="-0.41">SHF</text>
<rect x="157.87" y="507.80" width="24.20" height="17.80" fill="#8484d4"/>
<rect x="157.87" y="507.80" width="23.20" height="16.80" fill="#b0b0f0"/>
<rect x="158.87" y="508.80" width="22.20" height="15.80" fill="#6868d0"/>
<text x="159.67" y="516.20" font-family='"DejaVu Sans Mono", "Liberation Mono", monospace' font-size="7.41" fill="#1c1c78" textLength="13.80" lengthAdjust="spacingAndGlyphs" xml:space="preserve" letter-spacing="-0.41">WL</text>
<text x="159.67" y="523.40" font-family='"DejaVu Sans Mono", "Liberation Mono", monospace' font-size="7.41" fill="#1c1c78" textLength="20.70" lengthAdjust="spacingAndGlyphs" xml:space="preserve" letter-spacing="-0.41">SHF</text>
<rect x="185.16" y="507.80" width="24.20" height="17.80" fill="#8484d4"/>
<rect x="185.16" y="507.80" width="23.20" height="16.80" fill="#b0b0f0"/>
<rect x="186.16" y="508.80" width="22.20" height="15.80" fill="#6868d0"/>
<text x="186.96" y="516.20" font-family='"DejaVu Sans Mono", "Liberation Mono", monospace' font-size="7.41" fill="#1c1c78" textLength="20.70" lengthAdjust="spacingAndGlyphs" xml:space="preserve" letter-spacing="-0.41">NOI</text>
<text x="186.96" y="523.40" font-family='"DejaVu Sans Mono", "Liberation Mono", monospace' font-size="7.41" fill="#1c1c78" textLength="20.70" lengthAdjust="spacingAndGlyphs" xml:space="preserve" letter-spacing="-0.41">MSK</text>
<rect x="212.45" y="507.80" width="24.20" height="17.80" fill="#9090c8"/>
<rect x="212.45" y="507.80" width="23.20" height="16.80" fill="#202058"/>
<rect x="213.45" y="508.80" width="22.20" height="15.80" fill="#03033c"/>
<text x="214.25" y="516.20" font-family='"DejaVu Sans Mono", "Liberation Mono", monospace' font-size="7.41" fill="#f0f0f8" textLength="20.70" lengthAdjust="spacingAndGlyphs" xml:space="preserve" letter-spacing="-0.41">SRC</text>
<text x="214.25" y="523.40" font-family='"DejaVu Sans Mono", "Liberation Mono", monospace' font-size="7.41" fill="#f0f0f8" textLength="20.70" lengthAdjust="spacingAndGlyphs" xml:space="preserve" letter-spacing="-0.41">ZOM</text>
<rect x="239.74" y="507.80" width="24.20" height="17.80" fill="#9090c8"/>
<rect x="239.74" y="507.80" width="23.20" height="16.80" fill="#202058"/>
<rect x="240.74" y="508.80" width="22.20" height="15.80" fill="#03033c"/>
<text x="241.54" y="516.20" font-family='"DejaVu Sans Mono", "Liberation Mono", monospace' font-size="7.41" fill="#f0f0f8" textLength="20.70" lengthAdjust="spacingAndGlyphs" xml:space="preserve" letter-spacing="-0.41">SRC</text>
<text x="241.54" y="523.40" font-family='"DejaVu Sans Mono", "Liberation Mono", monospace' font-size="7.41" fill="#f0f0f8" textLength="20.70" lengthAdjust="spacingAndGlyphs" xml:space="preserve" letter-spacing="-0.41">1-2</text>
<rect x="267.03" y="507.80" width="24.20" height="17.80" fill="#8484d4"/>
<rect x="267.03" y="507.80" width="23.20" height="16.80" fill="#b0b0f0"/>
<rect x="268.03" y="508.80" width="22.20" height="15.80" fill="#6868d0"/>
<text x="268.83" y="516.20" font-family='"DejaVu Sans Mono", "Liberation Mono", monospace' font-size="7.41" fill="#1c1c78" textLength="20.70" lengthAdjust="spacingAndGlyphs" xml:space="preserve" letter-spacing="-0.41">VAC</text>
<text x="268.83" y="523.40" font-family='"DejaVu Sans Mono", "Liberation Mono", monospace' font-size="7.41" fill="#1c1c78" textLength="13.80" lengthAdjust="spacingAndGlyphs" xml:space="preserve" letter-spacing="-0.41">WL</text>
<rect x="294.32" y="507.80" width="24.20" height="17.80" fill="#9090c8"/>
<rect x="294.32" y="507.80" width="23.20" height="16.80" fill="#202058"/>
<rect x="295.32" y="508.80" width="22.20" height="15.80" fill="#03033c"/>
<text x="296.12" y="516.20" font-family='"DejaVu Sans Mono", "Liberation Mono", monospace' font-size="7.41" fill="#f0f0f8" textLength="20.70" lengthAdjust="spacingAndGlyphs" xml:space="preserve" letter-spacing="-0.41">AUT</text>
<text x="296.12" y="523.40" font-family='"DejaVu Sans Mono", "Liberation Mono", monospace' font-size="7.41" fill="#f0f0f8" textLength="20.70" lengthAdjust="spacingAndGlyphs" xml:space="preserve" letter-spacing="-0.41">OFS</text>
<rect x="321.61" y="507.80" width="24.20" height="17.80" fill="#9090c8"/>
<rect x="321.61" y="507.80" width="23.20" height="16.80" fill="#202058"/>
<rect x="322.61" y="508.80" width="22.20" height="15.80" fill="#03033c"/>
<text x="323.41" y="516.20" font-family='"DejaVu Sans Mono", "Liberation Mono", monospace' font-size="7.41" fill="#f0f0f8" textLength="20.70" lengthAdjust="spacingAndGlyphs" xml:space="preserve" letter-spacing="-0.41">AUT</text>
<text x="323.41" y="523.40" font-family='"DejaVu Sans Mono", "Liberation Mono", monospace' font-size="7.41" fill="#f0f0f8" textLength="20.70" lengthAdjust="spacingAndGlyphs" xml:space="preserve" letter-spacing="-0.41">ANA</text>
<rect x="348.90" y="507.80" width="24.20" height="17.80" fill="#8484d4"/>
<rect x="348.90" y="507.80" width="23.20" height="16.80" fill="#b0b0f0"/>
<rect x="349.90" y="508.80" width="22.20" height="15.80" fill="#6868d0"/>
<text x="350.70" y="516.20" font-family='"DejaVu Sans Mono", "Liberation Mono", monospace' font-size="7.41" fill="#1c1c78" textLength="20.70" lengthAdjust="spacingAndGlyphs" xml:space="preserve" letter-spacing="-0.41">AUT</text>
<text x="350.70" y="523.40" font-family='"DejaVu Sans Mono", "Liberation Mono", monospace' font-size="7.41" fill="#1c1c78" textLength="20.70" lengthAdjust="spacingAndGlyphs" xml:space="preserve" letter-spacing="-0.41">SRC</text>
<rect x="376.19" y="507.80" width="24.20" height="17.80" fill="#8484d4"/>
<rect x="376.19" y="507.80" width="23.20" height="16.80" fill="#b0b0f0"/>
<rect x="377.19" y="508.80" width="22.20" height="15.80" fill="#6868d0"/>
<text x="377.99" y="516.20" font-family='"DejaVu Sans Mono", "Liberation Mono", monospace' font-size="7.41" fill="#1c1c78" textLength="20.70" lengthAdjust="spacingAndGlyphs" xml:space="preserve" letter-spacing="-0.41">AUT</text>
<text x="377.99" y="523.40" font-family='"DejaVu Sans Mono", "Liberation Mono", monospace' font-size="7.41" fill="#1c1c78" textLength="20.70" lengthAdjust="spacingAndGlyphs" xml:space="preserve" letter-spacing="-0.41">SCL</text>
<rect x="403.48" y="507.80" width="24.20" height="17.80" fill="#8484d4"/>
<rect x="403.48" y="507.80" width="23.20" height="16.80" fill="#b0b0f0"/>
<rect x="404.48" y="508.80" width="22.20" height="15.80" fill="#6868d0"/>
<text x="405.28" y="516.20" font-family='"DejaVu Sans Mono", "Liberation Mono", monospace' font-size="7.41" fill="#1c1c78" textLength="20.70" lengthAdjust="spacingAndGlyphs" xml:space="preserve" letter-spacing="-0.41">AUT</text>
<text x="405.28" y="523.40" font-family='"DejaVu Sans Mono", "Liberation Mono", monospace' font-size="7.41" fill="#1c1c78" textLength="20.70" lengthAdjust="spacingAndGlyphs" xml:space="preserve" letter-spacing="-0.41">REF</text>
<rect x="430.77" y="507.80" width="24.20" height="17.80" fill="#8484d4"/>
<rect x="430.77" y="507.80" width="23.20" height="16.80" fill="#b0b0f0"/>
<rect x="431.77" y="508.80" width="22.20" height="15.80" fill="#6868d0"/>
<text x="432.57" y="516.20" font-family='"DejaVu Sans Mono", "Liberation Mono", monospace' font-size="7.41" fill="#1c1c78" textLength="20.70" lengthAdjust="spacingAndGlyphs" xml:space="preserve" letter-spacing="-0.41">AUT</text>
<text x="432.57" y="523.40" font-family='"DejaVu Sans Mono", "Liberation Mono", monospace' font-size="7.41" fill="#1c1c78" textLength="20.70" lengthAdjust="spacingAndGlyphs" xml:space="preserve" letter-spacing="-0.41">CTR</text>
<rect x="458.06" y="507.80" width="24.20" height="17.80" fill="#8484d4"/>
<rect x="458.06" y="507.80" width="23.20" height="16.80" fill="#b0b0f0"/>
<rect x="459.06" y="508.80" width="22.20" height="15.80" fill="#6868d0"/>
<text x="459.86" y="516.20" font-family='"DejaVu Sans Mono", "Liberation Mono", monospace' font-size="7.41" fill="#1c1c78" textLength="20.70" lengthAdjust="spacingAndGlyphs" xml:space="preserve" letter-spacing="-0.41">SWP</text>
<text x="459.86" y="523.40" font-family='"DejaVu Sans Mono", "Liberation Mono", monospace' font-size="7.41" fill="#1c1c78" textLength="20.70" lengthAdjust="spacingAndGlyphs" xml:space="preserve" letter-spacing="-0.41">1-2</text>
<rect x="485.35" y="507.80" width="24.20" height="17.80" fill="#8484d4"/>
<rect x="485.35" y="507.80" width="23.20" height="16.80" fill="#b0b0f0"/>
<rect x="486.35" y="508.80" width="22.20" height="15.80" fill="#6868d0"/>
<text x="487.15" y="516.20" font-family='"DejaVu Sans Mono", "Liberation Mono", monospace' font-size="7.41" fill="#1c1c78" textLength="20.70" lengthAdjust="spacingAndGlyphs" xml:space="preserve" letter-spacing="-0.41">SMO</text>
<text x="487.15" y="523.40" font-family='"DejaVu Sans Mono", "Liberation Mono", monospace' font-size="7.41" fill="#1c1c78" textLength="20.70" lengthAdjust="spacingAndGlyphs" xml:space="preserve" letter-spacing="-0.41">OTH</text>
<rect x="516.40" y="507.80" width="28.80" height="17.80" fill="#8484d4"/>
<rect x="516.40" y="507.80" width="27.80" height="16.80" fill="#b0b0f0"/>
<rect x="517.40" y="508.80" width="26.80" height="15.80" fill="#6868d0"/>
<text x="520.50" y="520.60" font-family='"Liberation Sans", sans-serif' font-size="9.74" fill="#e0e020" textLength="20.90" lengthAdjust="spacingAndGlyphs" xml:space="preserve" font-weight="bold">RPT</text>
<rect x="548.50" y="507.80" width="28.70" height="17.80" fill="#8484d4"/>
<rect x="548.50" y="507.80" width="27.70" height="16.80" fill="#b0b0f0"/>
<rect x="549.50" y="508.80" width="26.70" height="15.80" fill="#6868d0"/>
<text x="552.55" y="520.60" font-family='"Liberation Sans", sans-serif' font-size="9.74" fill="#e0e020" textLength="20.90" lengthAdjust="spacingAndGlyphs" xml:space="preserve" font-weight="bold">SGL</text>
<rect x="580.20" y="507.80" width="29.80" height="17.80" fill="#9090c8"/>
<rect x="580.20" y="507.80" width="28.80" height="16.80" fill="#181850"/>
<rect x="581.20" y="508.80" width="27.80" height="15.80" fill="#04042c"/>
<text x="584.80" y="520.60" font-family='"Liberation Sans", sans-serif' font-size="9.74" fill="#e0e020" textLength="20.90" lengthAdjust="spacingAndGlyphs" xml:space="preserve" font-weight="bold">STP</text></svg></body></html>
